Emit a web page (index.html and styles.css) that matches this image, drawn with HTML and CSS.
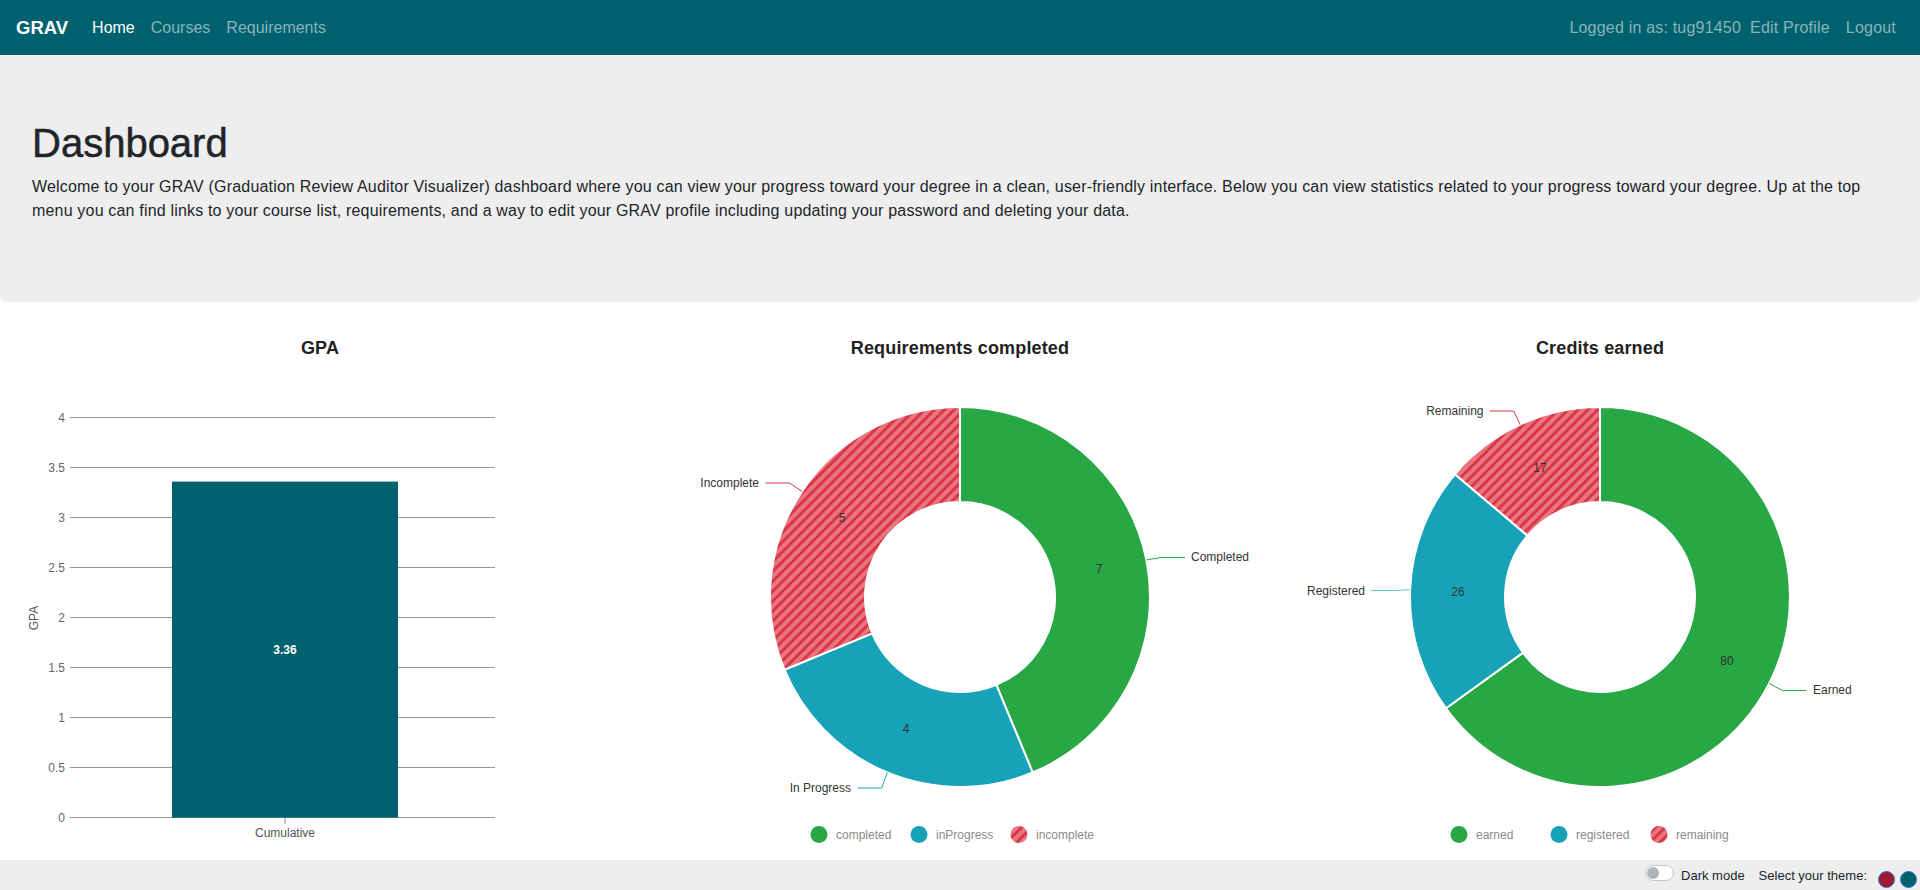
FILE: index.html
```
<!DOCTYPE html>
<html lang="en">
<head>
<meta charset="utf-8">
<title>GRAV Dashboard</title>
<link rel="stylesheet" href="styles.css">
</head>
<body>
<nav class="navbar">
  <a class="brand" href="#">GRAV</a>
  <ul class="nav-list">
    <li><a class="nav-link active" href="#">Home</a></li>
    <li><a class="nav-link" href="#">Courses</a></li>
    <li><a class="nav-link" href="#">Requirements</a></li>
  </ul>
  <div class="nav-right">
    <span class="navbar-text">Logged in as: tug91450</span>
    <a class="nav-link" href="#">Edit Profile</a>
    <a class="nav-link" href="#">Logout</a>
  </div>
</nav>

<header class="jumbotron">
  <h1>Dashboard</h1>
  <p>Welcome to your GRAV (Graduation Review Auditor Visualizer) dashboard where you can view your progress toward your degree in a clean, user-friendly interface. Below you can view statistics related to your progress toward your degree. Up at the top menu you can find links to your course list, requirements, and a way to edit your GRAV profile including updating your password and deleting your data.</p>
</header>

<main class="charts">
  <section class="chart-col">
    <h2 class="chart-title">GPA</h2>
    <svg class="chart" width="640" height="501" viewBox="0 359 640 501">
      <g class="grid">
        <line x1="70" x2="495" y1="417.5" y2="417.5"/>
        <line x1="70" x2="495" y1="467.5" y2="467.5"/>
        <line x1="70" x2="495" y1="517.5" y2="517.5"/>
        <line x1="70" x2="495" y1="567.5" y2="567.5"/>
        <line x1="70" x2="495" y1="617.5" y2="617.5"/>
        <line x1="70" x2="495" y1="667.5" y2="667.5"/>
        <line x1="70" x2="495" y1="717.5" y2="717.5"/>
        <line x1="70" x2="495" y1="767.5" y2="767.5"/>
        <line x1="70" x2="495" y1="817.5" y2="817.5"/>
        <line x1="285" x2="285" y1="818" y2="824"/>
      </g>
      <g class="tick">
        <text x="65" y="417.6">4</text>
        <text x="65" y="467.6">3.5</text>
        <text x="65" y="517.6">3</text>
        <text x="65" y="567.6">2.5</text>
        <text x="65" y="617.6">2</text>
        <text x="65" y="667.6">1.5</text>
        <text x="65" y="717.6">1</text>
        <text x="65" y="767.6">0.5</text>
        <text x="65" y="817.6">0</text>
      </g>
      <rect class="bar" x="172" y="481.6" width="226" height="336"/>
      <text class="bar-label" x="285" y="650">3.36</text>
      <text class="axis-x" x="285" y="833">Cumulative</text>
      <text class="axis-title" x="34" y="618" transform="rotate(-90 34 618)">GPA</text>
    </svg>
  </section>

  <section class="chart-col">
    <h2 class="chart-title">Requirements completed</h2>
    <svg class="chart" width="640" height="501" viewBox="640 359 640 501">
      <defs>
        <pattern id="stripeA" width="7" height="7" patternUnits="userSpaceOnUse" patternTransform="rotate(45)">
          <rect width="7" height="7" fill="#dc3545"/>
          <rect width="4" height="7" fill="#ffffff" fill-opacity="0.32"/>
        </pattern>
      </defs>
      <g class="seg">
        <path fill="#28a745" d="M960,407 A190,190 0 0 1 1032.71,772.54 L996.35,684.77 A95,95 0 0 0 960,502 Z"/>
        <path fill="#17a2b8" d="M1032.71,772.54 A190,190 0 0 1 784.46,669.71 L872.23,633.35 A95,95 0 0 0 996.35,684.77 Z"/>
        <path fill="url(#stripeA)" d="M784.46,669.71 A190,190 0 0 1 960,407 L960,502 A95,95 0 0 0 872.23,633.35 Z"/>
      </g>
      <g class="dl">
        <text x="1099" y="568.5">7</text>
        <text x="906" y="728.5">4</text>
        <text x="842" y="518">5</text>
      </g>
      <polyline class="lead" stroke="#28a745" points="1146.35,559.93 1161.06,557.5 1185,557.5"/>
      <polyline class="lead" stroke="#17a2b8" points="887.29,772.54 881.55,788 857.5,788"/>
      <polyline class="lead" stroke="#dc3545" points="802,491.44 789.55,483 765.5,483"/>
      <g class="ol">
        <text x="1191" y="557">Completed</text>
        <text class="end" x="851" y="787.5">In Progress</text>
        <text class="end" x="759" y="482.5">Incomplete</text>
      </g>
      <g class="legend">
        <circle cx="819" cy="834.5" r="8.5" fill="#28a745"/>
        <text x="836" y="834.5">completed</text>
        <circle cx="919" cy="834.5" r="8.5" fill="#17a2b8"/>
        <text x="936" y="834.5">inProgress</text>
        <circle cx="1019" cy="834.5" r="8.5" fill="url(#stripeA)"/>
        <text x="1036" y="834.5">incomplete</text>
      </g>
    </svg>
  </section>

  <section class="chart-col">
    <h2 class="chart-title">Credits earned</h2>
    <svg class="chart" width="640" height="501" viewBox="1280 359 640 501">
      <defs>
        <pattern id="stripeB" width="7" height="7" patternUnits="userSpaceOnUse" patternTransform="rotate(45)">
          <rect width="7" height="7" fill="#dc3545"/>
          <rect width="4" height="7" fill="#ffffff" fill-opacity="0.32"/>
        </pattern>
      </defs>
      <g class="seg">
        <path fill="#28a745" d="M1600,407 A190,190 0 1 1 1446.0,708.29 L1523.0,652.64 A95,95 0 1 0 1600,502 Z"/>
        <path fill="#17a2b8" d="M1446.0,708.29 A190,190 0 0 1 1454.97,474.25 L1527.49,535.63 A95,95 0 0 0 1523.0,652.64 Z"/>
        <path fill="url(#stripeB)" d="M1454.97,474.25 A190,190 0 0 1 1600,407 L1600,502 A95,95 0 0 0 1527.49,535.63 Z"/>
      </g>
      <g class="dl">
        <text x="1727" y="661">80</text>
        <text x="1458" y="592">26</text>
        <text x="1540" y="467.5">17</text>
      </g>
      <polyline class="lead" stroke="#28a745" points="1769.2,683.46 1782.5,690.5 1806.5,690.5"/>
      <polyline class="lead" stroke="#5ec3d3" points="1410.14,589.72 1395.15,590.5 1371,590.5"/>
      <polyline class="lead" stroke="#dc3545" points="1520.06,424.63 1513.75,411 1489.75,411"/>
      <g class="ol">
        <text x="1813" y="689.5">Earned</text>
        <text class="end" x="1365" y="591">Registered</text>
        <text class="end" x="1483.5" y="410.5">Remaining</text>
      </g>
      <g class="legend">
        <circle cx="1459" cy="834.5" r="8.5" fill="#28a745"/>
        <text x="1476" y="834.5">earned</text>
        <circle cx="1559" cy="834.5" r="8.5" fill="#17a2b8"/>
        <text x="1576" y="834.5">registered</text>
        <circle cx="1659" cy="834.5" r="8.5" fill="url(#stripeB)"/>
        <text x="1676" y="834.5">remaining</text>
      </g>
    </svg>
  </section>
</main>

<footer class="footer">
  <span class="switch" aria-hidden="true"><span class="knob"></span></span>
  <span class="footer-label">Dark mode</span>
  <span class="footer-label theme-label">Select your theme:</span>
  <span class="theme-dot crimson"></span>
  <span class="theme-dot teal"></span>
</footer>
</body>
</html>
```
FILE: styles.css
```
* { box-sizing: border-box; }

html, body {
  margin: 0;
  padding: 0;
}

body {
  width: 1920px;
  height: 890px;
  overflow: hidden;
  display: flex;
  flex-direction: column;
  font-family: "Liberation Sans", Arial, sans-serif;
  color: #212529;
  background: #ffffff;
}

a { text-decoration: none; }

/* ---------- navbar ---------- */
.navbar {
  height: 55px;
  flex: 0 0 55px;
  display: flex;
  align-items: center;
  padding: 0 16px;
  background: #00616e;
}

.brand {
  color: #ffffff;
  font-size: 18.5px;
  font-weight: bold;
  margin-right: 16px;
}

.nav-list {
  list-style: none;
  display: flex;
  margin: 0;
  padding: 0;
}

.nav-link {
  display: block;
  padding: 0 8px;
  font-size: 16px;
  color: #8ab4ba;
}

.nav-link.active { color: #ffffff; }

.nav-right {
  margin-left: auto;
  display: flex;
  align-items: center;
  letter-spacing: 0.2px;
}

.navbar-text {
  font-size: 16px;
  color: #8ab4ba;
  margin-right: 1px;
}

/* ---------- jumbotron ---------- */
.jumbotron {
  flex: 0 0 247px;
  background: #eeeeee;
  padding: 64px 32px;
  border-radius: 0 0 5px 5px;
}

.jumbotron h1 {
  margin: 0 0 8px;
  font-size: 40px;
  font-weight: normal;
  line-height: 48px;
  -webkit-text-stroke: 0.5px #212529;
}

.jumbotron p {
  margin: 0;
  font-size: 16px;
  line-height: 24px;
  letter-spacing: 0.18px;
}

/* ---------- charts ---------- */
.charts {
  flex: 1 1 auto;
  display: grid;
  grid-template-columns: repeat(3, 640px);
}

.chart-col {
  display: flex;
  flex-direction: column;
  align-items: center;
  padding-top: 35px;
}

.chart-title {
  margin: 0;
  font-size: 18px;
  line-height: 22px;
  font-weight: bold;
  letter-spacing: 0.15px;
  color: #222222;
}

.chart {
  display: block;
  font-family: "Liberation Sans", Arial, sans-serif;
  font-size: 12px;
}

.grid line {
  stroke: #969696;
  stroke-width: 1.2;
}

.tick text {
  fill: #666666;
  text-anchor: end;
  dominant-baseline: central;
}

.bar { fill: #00616e; }

.bar-label {
  fill: #ffffff;
  font-weight: bold;
  text-anchor: middle;
  dominant-baseline: central;
}

.axis-x, .axis-title {
  fill: #555555;
  text-anchor: middle;
  dominant-baseline: central;
}

.seg path {
  stroke: #ffffff;
  stroke-width: 2;
  stroke-linejoin: round;
}

.dl text {
  fill: #333333;
  text-anchor: middle;
  dominant-baseline: central;
}

.lead {
  fill: none;
  stroke-width: 1;
}

.ol text {
  fill: #333333;
  dominant-baseline: central;
}

.ol text.end { text-anchor: end; }

.legend text {
  fill: #8a8a8a;
  dominant-baseline: central;
}

/* ---------- footer ---------- */
.footer {
  flex: 0 0 30px;
  height: 30px;
  background: #eeeeee;
  display: flex;
  align-items: center;
  justify-content: flex-end;
  padding-right: 3px;
  font-size: 13px;
  color: #212529;
}

.switch {
  width: 29px;
  height: 16px;
  border: 1px solid #c4c7ca;
  border-radius: 8px;
  background: #ffffff;
  display: flex;
  align-items: center;
  padding-left: 1px;
  margin-right: 7px;
  margin-bottom: 4px;
}

.knob {
  width: 12px;
  height: 12px;
  border-radius: 50%;
  background: #b0b5ba;
}

.footer-label { white-space: nowrap; }

.theme-label {
  margin-left: 14px;
  margin-right: 11px;
}

.theme-dot {
  width: 17px;
  height: 17px;
  border-radius: 50%;
  border: 1.5px solid #3d6fd6;
  align-self: flex-end;
  margin-bottom: 2px;
}

.theme-dot.crimson { background: #9b1b30; margin-right: 5px; }
.theme-dot.teal { background: #00616e; }
```
